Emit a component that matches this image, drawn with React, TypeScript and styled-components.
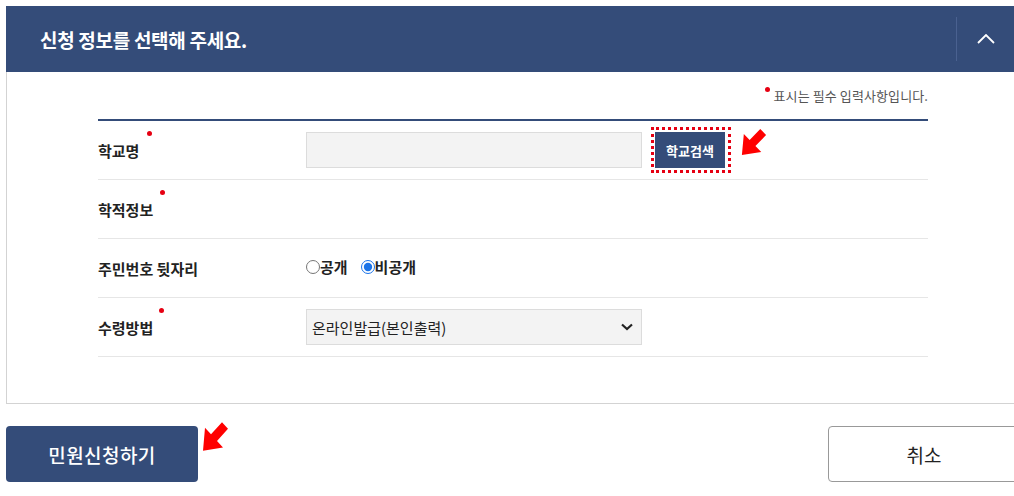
import React, { useState } from 'react';
import styled, { createGlobalStyle } from 'styled-components';

const NAVY = '#344c79';

const GlobalStyle = createGlobalStyle`
  html, body {
    margin: 0;
    padding: 0;
    background: #fff;
    overflow: hidden;
  }
  body {
    font-family: "Noto Sans CJK KR", "Noto Sans", sans-serif;
    color: #222;
  }
`;

const Page = styled.div`
  width: 1014px;
  padding: 6px 0 0 6px;
`;

const Panel = styled.section`
  border: 1px solid #d3d3d3;
  border-top: none;
`;

const Header = styled.div`
  height: 66px;
  background: ${NAVY};
  display: flex;
  align-items: center;
  justify-content: space-between;
  margin: 0 -1px;
`;

const Title = styled.h2`
  margin: 0 0 0 34px;
  font-size: 19px;
  font-weight: 700;
  color: #fff;
  letter-spacing: -0.3px;
`;

const ToggleButton = styled.button`
  width: 64px;
  height: 44px;
  border: none;
  border-left: 1px solid #4a6190;
  background: transparent;
  display: flex;
  align-items: center;
  justify-content: center;
  padding: 0 6px 0 0;
  cursor: pointer;
`;

const Body = styled.div`
  padding: 12px 91px 46px;
`;

const Note = styled.p`
  margin: 0 0 11px;
  text-align: right;
  font-size: 13px;
  color: #555;
  letter-spacing: 0.1px;
  line-height: 24px;
`;

const Dot = styled.span<{ top?: number; left?: number }>`
  display: inline-block;
  width: 5px;
  height: 5px;
  border-radius: 50%;
  background: #e60012;
  vertical-align: top;
  margin-top: ${({ top }) => top ?? 0}px;
  margin-left: ${({ left }) => left ?? 0}px;
`;

const NoteDot = styled(Dot)`
  margin-right: 4px;
  margin-top: 3px;
`;

const Table = styled.div`
  border-top: 2px solid ${NAVY};
`;

const Row = styled.div`
  display: grid;
  grid-template-columns: 208px 1fr;
  align-items: center;
  height: 58px;
  border-bottom: 1px solid #e6e6e6;
`;

const Label = styled.div`
  font-size: 15px;
  font-weight: 700;
  color: #222;
  display: flex;
  align-items: flex-start;
  gap: 4px;
`;

const Field = styled.div`
  display: flex;
  align-items: center;
  gap: 9px;
`;

const TextInput = styled.input`
  width: 336px;
  height: 36px;
  box-sizing: border-box;
  border: 1px solid #dcdcdc;
  background: #f3f3f3;
  padding: 0 10px;
  font-family: inherit;
`;

const SearchWrap = styled.div`
  position: relative;
  display: flex;
  align-items: center;
`;

const Highlight = styled.div`
  padding: 2px 3px 2px 1px;
  border: 3px dotted #e60012;
`;

const SearchButton = styled.button`
  height: 36px;
  padding: 0 11px;
  border: none;
  background: ${NAVY};
  color: #fff;
  font-family: inherit;
  font-size: 13px;
  font-weight: 700;
  display: block;
`;

const SmallArrow = styled.div`
  position: absolute;
  left: 88px;
  top: 0px;
  line-height: 0;
`;

const RadioGroup = styled.div`
  display: flex;
  align-items: center;
  gap: 13px;
  margin-top: -3px;
`;

const RadioLabel = styled.label`
  display: flex;
  align-items: center;
  font-size: 15px;
  font-weight: 700;
  color: #222;
  input {
    margin: 1px 0 0 0;
    width: 14px;
    height: 14px;
    accent-color: #1a73e8;
  }
`;

const SelectBox = styled.div`
  width: 336px;
  height: 36px;
  box-sizing: border-box;
  border: 1px solid #dcdcdc;
  background: #f3f3f3;
  display: flex;
  align-items: center;
  justify-content: space-between;
  padding: 0 8px 0 5px;
  font-size: 15px;
  color: #222;
`;

const Actions = styled.div`
  display: flex;
  justify-content: space-between;
  margin-top: 22px;
`;

const SubmitWrap = styled.div`
  position: relative;
`;

const SubmitButton = styled.button`
  width: 192px;
  height: 56px;
  border: none;
  border-radius: 4px;
  background: ${NAVY};
  color: #fff;
  font-family: inherit;
  font-size: 19px;
  font-weight: 500;
  letter-spacing: 0.4px;
  cursor: pointer;
`;

const BigArrow = styled.div`
  position: absolute;
  left: 194px;
  top: -6px;
  line-height: 0;
`;

const CancelButton = styled.button`
  width: 192px;
  height: 56px;
  border: 1px solid #999;
  border-radius: 4px;
  background: #fff;
  color: #222;
  font-family: inherit;
  font-size: 19px;
  font-weight: 400;
`;

const RedArrow = ({ w, h }: { w: number; h: number }) => (
  <svg width={w} height={h} viewBox="0 0 30 30" preserveAspectRatio="none">
    <path d="M3 28 L5 7 L11 13 L22 2 L28 8 L17 19 L23 25 Z" fill="#f00" />
  </svg>
);

export default function App() {
  const [privacy, setPrivacy] = useState('private');
  return (
    <>
      <GlobalStyle />
      <Page>
        <Panel>
          <Header>
            <Title>신청 정보를 선택해 주세요.</Title>
            <ToggleButton aria-label="접기">
              <svg width="18" height="10" viewBox="0 0 18 10">
                <path d="M1 9 L9 1 L17 9" stroke="#fff" strokeWidth="1.8" fill="none" />
              </svg>
            </ToggleButton>
          </Header>
          <Body>
            <Note>
              <NoteDot />
              표시는 필수 입력사항입니다.
            </Note>
            <Table>
              <Row>
                <Label>
                  학교명 <Dot top={-9} left={4} />
                </Label>
                <Field>
                  <TextInput />
                  <SearchWrap>
                    <Highlight>
                      <SearchButton>학교검색</SearchButton>
                    </Highlight>
                    <SmallArrow>
                      <RedArrow w={29} h={30} />
                    </SmallArrow>
                  </SearchWrap>
                </Field>
              </Row>
              <Row>
                <Label>
                  학적정보 <Dot top={-9} left={3} />
                </Label>
                <div />
              </Row>
              <Row>
                <Label>주민번호 뒷자리</Label>
                <RadioGroup>
                  <RadioLabel>
                    <input
                      type="radio"
                      name="privacy"
                      checked={privacy === 'public'}
                      onChange={() => setPrivacy('public')}
                    />
                    공개
                  </RadioLabel>
                  <RadioLabel>
                    <input
                      type="radio"
                      name="privacy"
                      checked={privacy === 'private'}
                      onChange={() => setPrivacy('private')}
                    />
                    비공개
                  </RadioLabel>
                </RadioGroup>
              </Row>
              <Row>
                <Label>
                  수령방법 <Dot top={-9} left={2} />
                </Label>
                <SelectBox>
                  온라인발급(본인출력)
                  <svg width="12" height="8" viewBox="0 0 12 8">
                    <path d="M1 1.5 L6 6 L11 1.5" stroke="#222" strokeWidth="2.2" fill="none" />
                  </svg>
                </SelectBox>
              </Row>
            </Table>
          </Body>
        </Panel>
        <Actions>
          <SubmitWrap>
            <SubmitButton>민원신청하기</SubmitButton>
            <BigArrow>
              <RedArrow w={30} h={33} />
            </BigArrow>
          </SubmitWrap>
          <CancelButton>취소</CancelButton>
        </Actions>
      </Page>
    </>
  );
}
